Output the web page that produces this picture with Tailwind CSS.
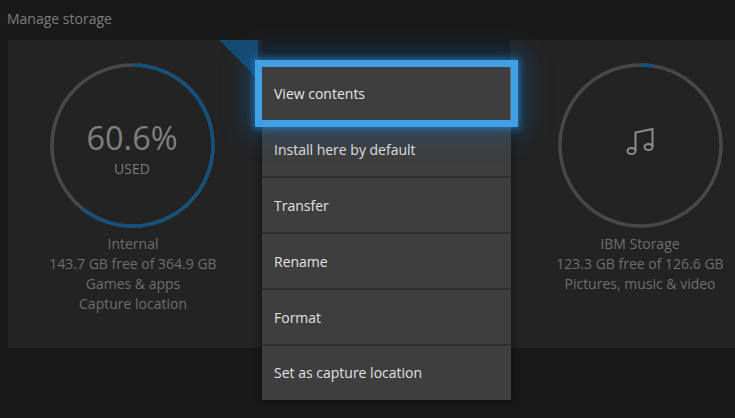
<!DOCTYPE html>
<html><head><meta charset="utf-8">
<script src="https://cdn.jsdelivr.net/npm/@tailwindcss/browser@4"></script>
</head>
<body class="bg-[#191919]">
<div class="relative w-[735px] h-[418px] overflow-hidden bg-[#191919] font-['Open_Sans',sans-serif]">
  <div class="h-[40px] pl-[7px] pt-[9px] text-[14px] leading-[20px] text-[#7d7d7d]">Manage storage</div>
  <div class="flex h-[308px] pl-[8px]">
    <section class="relative w-[254px] bg-[#232323] flex flex-col items-center">
      <div class="absolute right-[4px] top-0 w-0 h-0 border-l-[39px] border-l-transparent border-t-[39px] border-t-[#164a70]"></div>
      <div class="relative mt-[23px] w-[165px] h-[165px] -translate-x-[3px]">
        <svg class="absolute inset-0" width="165" height="165" viewBox="0 0 165 165">
          <circle cx="82.5" cy="82.5" r="80.5" fill="none" stroke="#484848" stroke-width="3.5"/>
          <circle cx="82.5" cy="82.5" r="80.5" fill="none" stroke="#14527e" stroke-width="3.5" pathLength="100" stroke-dasharray="60.6 39.4" transform="rotate(-90 82.5 82.5)"/>
        </svg>
        <div class="absolute inset-0 flex flex-col items-center pt-[52px]">
          <div class="text-[32.5px] leading-[45px] text-[#7f7f7f]">60.6%</div>
          <div class="text-[14px] leading-[20px] -mt-[1px] text-[#7a7a7a]">USED</div>
        </div>
      </div>
      <div class="mt-[6px] -translate-x-[2px] text-center text-[14px] leading-[20px] text-[#6e6e6e]">
        <p>Internal</p><p>143.7 GB free of 364.9 GB</p><p>Games &amp; apps</p><p>Capture location</p>
      </div>
    </section>
    <div class="w-[248px]"></div>
    <section class="flex-1 bg-[#232323] pl-[35px] flex flex-col items-center">
      <div class="relative mt-[23px] w-[165px] h-[165px]">
        <svg class="absolute inset-0" width="165" height="165" viewBox="0 0 165 165">
          <circle cx="82.5" cy="82.5" r="80.5" fill="none" stroke="#484848" stroke-width="3.5"/>
          <circle cx="82.5" cy="82.5" r="80.5" fill="none" stroke="#14527e" stroke-width="3.5" pathLength="100" stroke-dasharray="2.6 97.4" transform="rotate(-90 82.5 82.5)"/>
        </svg>
        <svg class="absolute left-[68px] top-[64px]" width="30" height="30" viewBox="0 0 30 30" fill="none" stroke="#8c8c8c" stroke-width="2">
          <path d="M9.5 24V5.5L26.5 2V20"/>
          <ellipse cx="5.5" cy="24" rx="4" ry="3"/>
          <ellipse cx="22.5" cy="20" rx="4" ry="3"/>
        </svg>
      </div>
      <div class="mt-[6px] text-center text-[14px] leading-[20px] text-[#6e6e6e]">
        <p>IBM Storage</p><p>123.3 GB free of 126.6 GB</p><p>Pictures, music &amp; video</p>
      </div>
    </section>
  </div>
  <div class="absolute left-[262px] top-[66px] w-[249px] flex flex-col bg-[#3e3e3e] text-[14px] text-[#e2e2e2] shadow-[0_0_6px_3px_rgba(0,0,0,0.3)]">
    <div class="h-[56px] flex items-center pl-[12px] border-b-2 border-[#303030]"></div>
    <div class="h-[56px] flex items-center pl-[12px] border-b-2 border-[#303030]">Install here by default</div>
    <div class="h-[56px] flex items-center pl-[12px] border-b-2 border-[#303030]">Transfer</div>
    <div class="h-[56px] flex items-center pl-[12px] border-b-2 border-[#303030]">Rename</div>
    <div class="h-[56px] flex items-center pl-[12px] border-b-2 border-[#303030]">Format</div>
    <div class="h-[54px] flex items-center pl-[12px]"><span class="-mt-[1px]">Set as capture location</span></div>
  </div>
  <div class="absolute left-[255px] top-[60px] w-[263px] h-[67px] flex items-center pl-[12px] bg-[#3e3e3e] border-[7px] border-[#3fa0e6] text-[14px] text-[#e8e8e8] shadow-[inset_-1px_0_0_#6e6e6e,0_0_6px_2px_rgba(40,140,220,0.55),0_0_24px_8px_rgba(20,100,170,0.4)]">View contents</div>
</div>
</body></html>
